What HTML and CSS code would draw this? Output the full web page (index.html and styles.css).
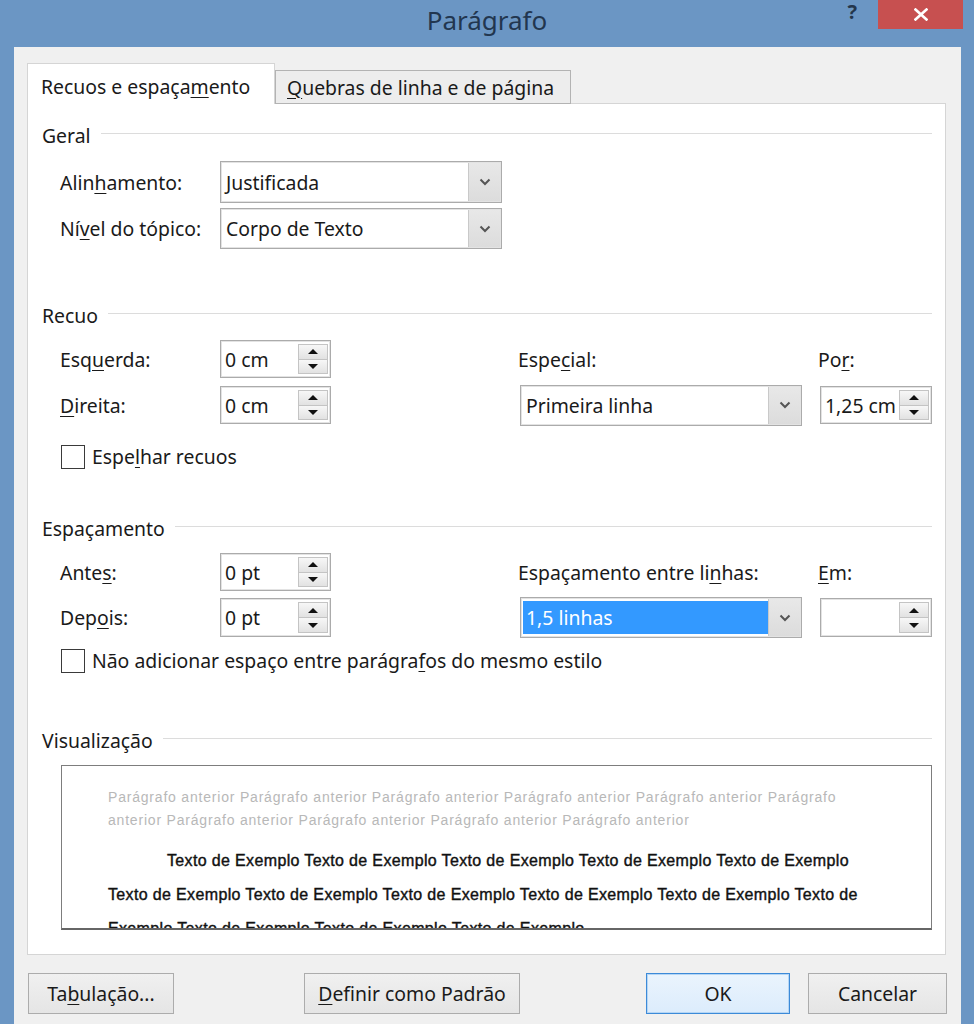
FILE: index.html
```html
<!DOCTYPE html>
<html lang="pt-BR">
<head>
<meta charset="utf-8">
<title>Parágrafo</title>
<link rel="stylesheet" href="styles.css">
</head>
<body>
<div class="window">
  <div class="titlebar">
    <div></div>
    <div class="title">Parágrafo</div>
    <div class="controls">
      <span class="help">?</span>
      <span class="close"><svg width="14" height="13" viewBox="0 0 14 13"><path d="M1.5 1.5 L12.5 11.5 M12.5 1.5 L1.5 11.5" stroke="#fff" stroke-width="2.6" stroke-linecap="square"/></svg></span>
    </div>
  </div>

  <div class="client">
    <div class="tabs">
      <div class="tab active">Recuos e espaça<u>m</u>ento</div>
      <div class="tab"><u>Q</u>uebras de linha e de página</div>
    </div>

    <div class="panel">
      <div class="heading">Geral</div>
      <div class="grid geral">
        <span class="label">Alin<u>h</u>amento:</span>
        <div class="combo"><span class="value">Justificada</span><span class="drop"><svg width="12" height="8" viewBox="0 0 12 8"><path d="M1.5 1.5 L6 6 L10.5 1.5" fill="none" stroke="#555" stroke-width="2"/></svg></span></div>
        <span class="label">Ní<u>v</u>el do tópico:</span>
        <div class="combo"><span class="value">Corpo de Texto</span><span class="drop"><svg width="12" height="8" viewBox="0 0 12 8"><path d="M1.5 1.5 L6 6 L10.5 1.5" fill="none" stroke="#555" stroke-width="2"/></svg></span></div>
      </div>

      <div class="heading recuo">Recuo</div>
      <div class="grid wide recuo-grid">
        <span class="label">Esq<u>u</u>erda:</span>
        <div class="spin"><span class="value">0 cm</span><span class="btns"><span class="up"></span><span class="down"></span></span></div>
        <span></span>
        <span class="label">Espe<u>c</u>ial:</span>
        <span></span>
        <span class="label">Po<u>r</u>:</span>

        <span class="label"><u>D</u>ireita:</span>
        <div class="spin"><span class="value">0 cm</span><span class="btns"><span class="up"></span><span class="down"></span></span></div>
        <span></span>
        <div class="combo right-combo"><span class="value">Primeira linha</span><span class="drop"><svg width="12" height="8" viewBox="0 0 12 8"><path d="M1.5 1.5 L6 6 L10.5 1.5" fill="none" stroke="#555" stroke-width="2"/></svg></span></div>
        <span></span>
        <div class="spin right-spin"><span class="value">1,25 cm</span><span class="btns"><span class="up"></span><span class="down"></span></span></div>
      </div>
      <label class="check first-check"><span class="box"></span><span>Espe<u>l</u>har recuos</span></label>

      <div class="heading espac">Espaçamento</div>
      <div class="grid wide espac-grid">
        <span class="label">Ante<u>s</u>:</span>
        <div class="spin"><span class="value">0 pt</span><span class="btns"><span class="up"></span><span class="down"></span></span></div>
        <span></span>
        <span class="label">Espaçamento entre li<u>n</u>has:</span>
        <span></span>
        <span class="label"><u>E</u>m:</span>

        <span class="label">Dep<u>o</u>is:</span>
        <div class="spin"><span class="value">0 pt</span><span class="btns"><span class="up"></span><span class="down"></span></span></div>
        <span></span>
        <div class="combo right-combo"><span class="value"><span class="selected">1,5 linhas</span></span><span class="drop"><svg width="12" height="8" viewBox="0 0 12 8"><path d="M1.5 1.5 L6 6 L10.5 1.5" fill="none" stroke="#555" stroke-width="2"/></svg></span></div>
        <span></span>
        <div class="spin right-spin"><span class="value"></span><span class="btns"><span class="up"></span><span class="down"></span></span></div>
      </div>
      <label class="check second-check"><span class="box"></span><span>Não adicionar espaço entre parágra<u>f</u>os do mesmo estilo</span></label>

      <div class="heading visual">Visualização</div>
      <div class="preview">
        <div class="prev-para">
          <div>Parágrafo anterior Parágrafo anterior Parágrafo anterior Parágrafo anterior Parágrafo anterior Parágrafo</div>
          <div>anterior Parágrafo anterior Parágrafo anterior Parágrafo anterior Parágrafo anterior</div>
        </div>
        <div class="sample">
          <div class="indent">Texto de Exemplo Texto de Exemplo Texto de Exemplo Texto de Exemplo Texto de Exemplo</div>
          <div>Texto de Exemplo Texto de Exemplo Texto de Exemplo Texto de Exemplo Texto de Exemplo Texto de</div>
          <div>Exemplo Texto de Exemplo Texto de Exemplo Texto de Exemplo</div>
        </div>
      </div>
    </div>

    <div class="buttons">
      <button class="btn tab-btn">Ta<u>b</u>ulação...</button>
      <button class="btn def-btn"><u>D</u>efinir como Padrão</button>
      <button class="btn ok-btn">OK</button>
      <button class="btn cancel-btn">Cancelar</button>
    </div>
  </div>
</div>
</body>
</html>
```

FILE: styles.css
```css
html, body {
  margin: 0;
  padding: 0;
}
body {
  width: 974px;
  height: 1024px;
  overflow: hidden;
  background: #6b96c4;
  font-family: "Noto Sans", "Open Sans", sans-serif;
  font-size: 19.4px;
  color: #1a1a1a;
}
u {
  text-decoration-thickness: 1px;
  text-underline-offset: 3px;
}
.window {
  display: flex;
  flex-direction: column;
  height: 1024px;
}

/* Title bar */
.titlebar {
  height: 47px;
  display: grid;
  grid-template-columns: 1fr auto 1fr;
  align-items: start;
}
.title {
  font-size: 26px;
  line-height: 40px;
  color: #22364f;
}
.controls {
  display: flex;
  justify-content: flex-end;
  align-items: flex-start;
  padding-right: 11px;
}
.help {
  font-size: 20px;
  font-weight: 700;
  line-height: 24px;
  color: #24364c;
  margin-right: 21px;
}
.close {
  width: 85px;
  height: 29px;
  background: #c75050;
  display: flex;
  align-items: center;
  justify-content: center;
}

/* Client area */
.client {
  flex: 1;
  margin: 0 13px 0 14px;
  background: #f0f0f0;
  padding: 16px 15px 0 13px;
  display: flex;
  flex-direction: column;
}
.tabs {
  display: flex;
  align-items: flex-end;
  height: 41px;
  margin-bottom: -1px;
  position: relative;
  z-index: 1;
}
.tab {
  box-sizing: border-box;
  display: flex;
  align-items: center;
  white-space: nowrap;
}
.tab.active {
  width: 248px;
  height: 41px;
  padding: 5px 0 0 13px;
  background: #fff;
  border: 1px solid #d5d5d5;
  border-bottom: none;
}
.tab:not(.active) {
  width: 296px;
  height: 34px;
  padding-left: 11px;
  background: #ededed;
  border: 1px solid #b3b3b3;
}

.panel {
  box-sizing: border-box;
  height: 852px;
  background: #fff;
  border: 1px solid #d5d5d5;
  padding: 19px 13px 0 14px;
  display: flex;
  flex-direction: column;
}
.heading {
  display: flex;
  align-items: center;
  height: 24px;
  white-space: nowrap;
}
.heading::after {
  content: "";
  flex: 1;
  border-top: 1px solid #dcdcdc;
  margin: 0 0 3px 10px;
}
.heading.recuo { margin-top: 54px; }
.heading.espac { margin-top: 47px; }
.heading.visual { margin-top: 55px; }

.grid {
  display: grid;
  margin-left: 18px;
  align-items: center;
}
.grid.geral {
  margin-top: 14px;
  grid-template-columns: 160px 282px;
  grid-template-rows: 42px 41px;
  row-gap: 5px;
}
.grid.wide {
  margin-top: 13px;
  grid-template-columns: 160px 111px 187px 284px 16px 114px;
  grid-template-rows: 38px 38px;
  row-gap: 8px;
}
.grid.espac-grid {
  grid-template-rows: 38px 39px;
  row-gap: 7px;
}
.label {
  white-space: nowrap;
}

/* Combo box */
.combo {
  box-sizing: border-box;
  height: 100%;
  display: flex;
  background: #fff;
  border: 1px solid #ababab;
  box-shadow: inset 0 0 0 1px #e3e3e3;
}
.combo .value {
  flex: 1;
  display: flex;
  align-items: center;
  padding-left: 5px;
  white-space: nowrap;
}
.combo .drop {
  width: 31px;
  margin: 1px 1px 1px 0;
  display: flex;
  align-items: center;
  justify-content: center;
  background: linear-gradient(#e8e8e8, #dcdcdc);
  border-left: 1px solid #c9c9c9;
}
.right-combo {
  height: 41px;
  margin-left: 2px;
}
.selected {
  display: flex;
  align-items: center;
  background: #3399ff;
  color: #fff;
  height: 33px;
  width: 245px;
  margin-left: -3px;
  padding-left: 3px;
  box-sizing: border-box;
}

/* Spin box */
.spin {
  box-sizing: border-box;
  height: 100%;
  display: flex;
  background: #fff;
  border: 1px solid #ababab;
  box-shadow: inset 0 0 0 1px #e3e3e3;
}
.spin .value {
  flex: 1;
  display: flex;
  align-items: center;
  padding-left: 4px;
  white-space: nowrap;
}
.right-spin {
  margin-left: 2px;
  width: 112px;
}
.btns {
  width: 28px;
  margin: 3px 2px 3px 0;
  display: flex;
  flex-direction: column;
  border: 1px solid #c4c4c4;
}
.up, .down {
  flex: 1;
  display: flex;
  align-items: center;
  justify-content: center;
  background: linear-gradient(#f7f7f7, #e2e2e2);
}
.up {
  border-bottom: 1px solid #c4c4c4;
}
.up::before {
  content: "";
  border-left: 5px solid transparent;
  border-right: 5px solid transparent;
  border-bottom: 5px solid #111;
}
.down::before {
  content: "";
  border-left: 5px solid transparent;
  border-right: 5px solid transparent;
  border-top: 5px solid #111;
}

/* Check boxes */
.check {
  display: flex;
  align-items: center;
  height: 25px;
  margin-left: 19px;
  white-space: nowrap;
}
.check .box {
  box-sizing: border-box;
  width: 24px;
  height: 24px;
  border: 1px solid #3a3a3a;
  background: #fff;
  margin-right: 7px;
}
.first-check { margin-top: 20px; }
.second-check { margin-top: 11px; }

/* Preview */
.preview {
  box-sizing: border-box;
  margin: 13px 0 0 19px;
  height: 165px;
  border: 1px solid #7d7d7d;
  border-bottom: 2px solid #666;
  background: #fff;
  overflow: hidden;
  padding: 20px 0 0 46px;
  font-family: "Liberation Sans", Arial, sans-serif;
  white-space: nowrap;
}
.prev-para {
  font-size: 14px;
  line-height: 23px;
  letter-spacing: 0.8px;
  color: #b8b8b8;
}
.sample {
  margin-top: 12px;
  font-size: 16px;
  font-weight: 400;
  line-height: 34px;
  color: #111;
  letter-spacing: 0.35px;
  -webkit-text-stroke: 0.4px #111;
}
.sample .indent {
  padding-left: 59px;
}

/* Buttons */
.buttons {
  display: flex;
  margin-top: 18px;
  height: 41px;
}
.btn {
  box-sizing: border-box;
  height: 41px;
  font-family: inherit;
  font-size: 19.4px;
  color: #1a1a1a;
  border: 1px solid #acacac;
  background: linear-gradient(#f0f0f0, #e5e5e5);
  padding: 0;
  white-space: nowrap;
}
.tab-btn { width: 146px; margin-left: 1px; }
.def-btn { width: 216px; margin-left: 130px; }
.ok-btn {
  width: 144px;
  margin-left: auto;
  border: 1px solid #3c8ad8;
  box-shadow: inset 0 0 0 1px #b5d6f5;
  background: linear-gradient(#eaf4fd, #dcecfc);
}
.cancel-btn { width: 139px; margin-left: 18px; margin-right: -1px; }
```
